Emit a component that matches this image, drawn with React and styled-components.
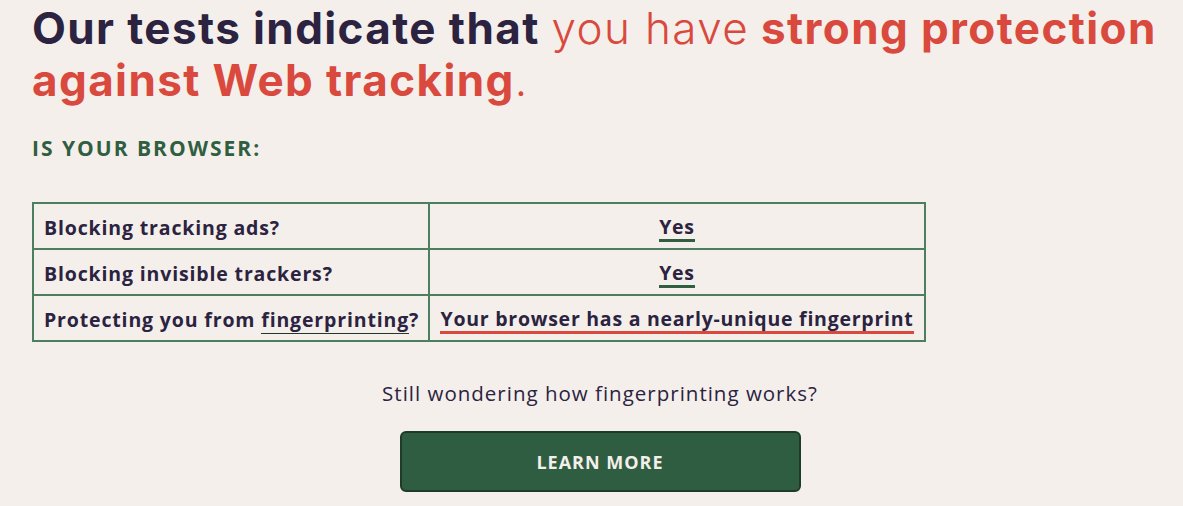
import styled, { createGlobalStyle } from "styled-components"

const GlobalStyle = createGlobalStyle`
    * { box-sizing: border-box; }
    body {
        margin: 0;
        background: #f4efeb;
        font-family: 'Open Sans', 'Liberation Sans', sans-serif;
        color: #2b2340;
    }
`;

const rows = [
    { label: "Blocking tracking ads?", answer: "Yes", good: true },
    { label: "Blocking invisible trackers?", answer: "Yes", good: true },
    { label: "fingerprint", answer: "Your browser has a nearly-unique fingerprint", good: false },
]

export default function App(){
    return(
        <Page>
            <GlobalStyle />
            <Headline>
                Our tests indicate that <Light>you have</Light> <Red>strong protection against Web tracking</Red><Light>.</Light>
            </Headline>

            <SubTitle>IS YOUR BROWSER:</SubTitle>

            <Results>
                <colgroup>
                    <col style={{ width: "396px" }} />
                    <col />
                </colgroup>
                <tbody>
                    {rows.map((r, i) => (
                        <tr key={i}>
                            <Question>
                                {r.label === "fingerprint"
                                    ? <>Protecting you from <TermLink>fingerprinting</TermLink>?</>
                                    : r.label}
                            </Question>
                            <Answer>
                                <Verdict $good={r.good}>{r.answer}</Verdict>
                            </Answer>
                        </tr>
                    ))}
                </tbody>
            </Results>

            <Footer>
                <p>Still wondering how fingerprinting works?</p>
                <LearnButton>LEARN MORE</LearnButton>
            </Footer>
        </Page>
    )
}

const Page = styled.div`
    width: 100%;
    padding: 0 10px 0 32px;
`;

const Headline = styled.h1`
    margin: 0;
    padding-top: 2px;
    font-family: 'Inter', 'Liberation Sans', sans-serif;
    font-weight: 700;
    font-size: 44px;
    line-height: 52px;
    letter-spacing: 1.4px;
    color: #2b2340;
`;

const Light = styled.span`
    font-weight: 300;
    color: #d9493d;
`;

const Red = styled.span`
    color: #d9493d;
`;

const SubTitle = styled.h2`
    margin: 30px 0 0;
    font-size: 21px;
    line-height: 24px;
    font-weight: 700;
    letter-spacing: 2px;
    color: #2f5e40;
`;

const Results = styled.table`
    margin-top: 42px;
    width: 894px;
    table-layout: fixed;
    border-collapse: collapse;
    border: 2px solid #4b7f5f;

    td {
        border: 2px solid #4b7f5f;
        height: 46px;
        font-size: 19.5px;
        font-weight: 700;
        color: #2b2340;
        padding: 2px 10px 0;
        white-space: nowrap;
    }
`;

const Question = styled.td`
    letter-spacing: 0.85px;
`;

const Answer = styled.td`
    text-align: center;
    letter-spacing: 0.75px;
    padding-left: 4px !important;
    padding-right: 4px !important;
`;

const TermLink = styled.span`
    color: #2b2340;
    border-bottom: 1.5px solid #1f3a2b;
`;

const Verdict = styled.span`
    display: inline-block;
    padding-bottom: 1px;
    border-bottom: 3px solid ${p => p.$good ? "#2f5e40" : "#d9493d"};
    line-height: 23px;
    white-space: nowrap;
`;

const Footer = styled.div`
    width: 1136px;
    display: flex;
    flex-direction: column;
    align-items: center;

    p {
        margin: 38px 0 0;
        font-size: 20.5px;
        line-height: 26px;
        letter-spacing: 1px;
        color: #2b2340;
    }
`;

const LearnButton = styled.button`
    margin-top: 25px;
    width: 401px;
    height: 61px;
    background: #2f5d41;
    border: 2px solid #1e3b29;
    border-radius: 6px;
    color: #f4efeb;
    font-family: 'Open Sans', 'Liberation Sans', sans-serif;
    font-size: 18px;
    font-weight: 700;
    letter-spacing: 1px;
    cursor: pointer;
`;
